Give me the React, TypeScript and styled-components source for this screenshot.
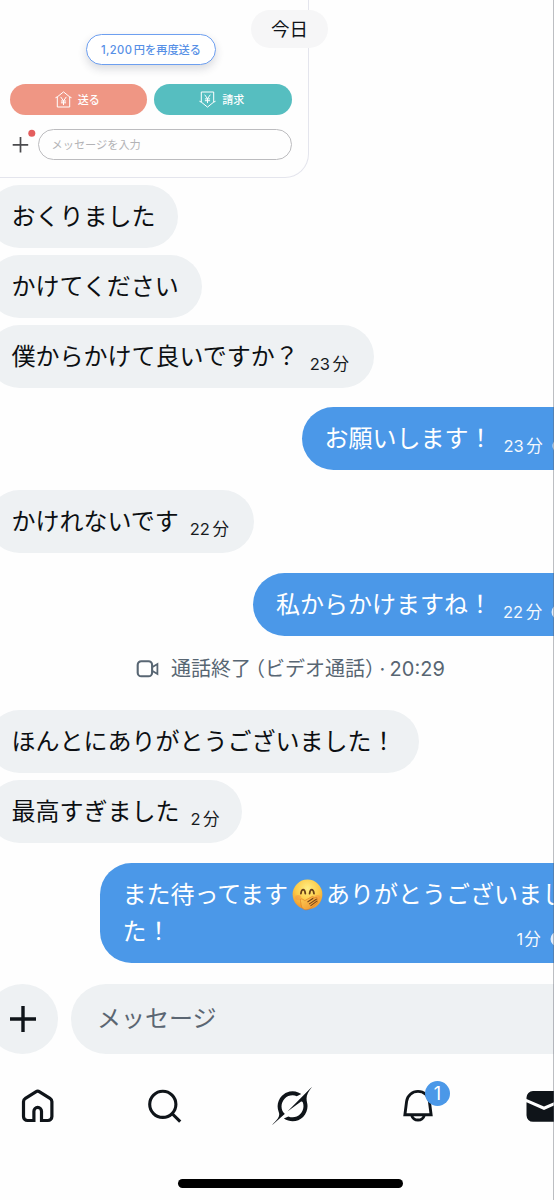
import React from 'react';
import styled, { createGlobalStyle, css } from 'styled-components';

const GlobalStyle = createGlobalStyle`
  * { box-sizing: border-box; }
  body { margin: 0; background: #fefefe; }
  svg { display: block; flex: none; }
`;

const Screen = styled.main`
  position: relative;
  width: 554px;
  height: 1200px;
  overflow: hidden;
  display: flex;
  flex-direction: column;
  background: #fefefe;
  color: #0f1419;
  font-family: Inter, 'Noto Sans CJK JP', sans-serif;
`;

const EdgeLine = styled.div`
  position: absolute;
  top: 0;
  right: 0;
  width: 1px;
  height: 100%;
  background: rgba(90, 95, 105, 0.4);
`;

const DatePill = styled.div`
  position: absolute;
  left: 251px;
  top: 10px;
  width: 77px;
  height: 38px;
  border-radius: 19px;
  background: #f6f6f7;
  display: flex;
  align-items: center;
  justify-content: center;
  font-size: 18.5px;
  line-height: 38px;
`;

const Card = styled.section`
  flex: none;
  width: 332px;
  height: 178px;
  margin-left: -23.5px;
  padding: 34px 16px 0 32px;
  border: 1px solid #e4e5ed;
  border-top: 0;
  border-radius: 0 0 24px 24px;
  display: flex;
  flex-direction: column;
`;

const ResendButton = styled.button`
  width: 130px;
  height: 31px;
  flex: none;
  margin-left: 76.5px;
  padding: 0;
  border: 1px solid #6d9ff0;
  border-radius: 16px;
  background: #fff;
  box-shadow: 0 4px 8px rgba(30, 40, 60, 0.16);
  color: #5790e6;
  font: 500 11.2px/30px Inter, 'Noto Sans CJK JP', sans-serif;
  white-space: nowrap;
`;

const Digits = styled.span`
  letter-spacing: 0.4px;
  margin-right: 1.5px;
`;

const CardActions = styled.div`
  display: flex;
  gap: 7px;
  margin-top: 19px;
`;

const ActionButton = styled.button<{ $tone: string }>`
  width: 137.5px;
  height: 31px;
  padding: 0 2px 0 0;
  border: 0;
  border-radius: 16px;
  background: ${(p) => p.$tone};
  color: #fff;
  display: flex;
  align-items: center;
  justify-content: center;
  gap: 6px;
  font: 500 11px/31px 'Noto Sans CJK JP', sans-serif;
`;

const CardCompose = styled.div`
  display: flex;
  align-items: center;
  margin-top: 14px;
`;

const CardInput = styled.div`
  width: 255px;
  height: 31px;
  border: 1px solid #bcbcbf;
  border-radius: 16px;
  padding-left: 13px;
  color: #b3b3b6;
  font-size: 11.2px;
  line-height: 30px;
`;

const Feed = styled.section`
  flex: none;
  display: flex;
  flex-direction: column;
  width: 603px;
  margin: 6.5px 0 0 -12px;
`;

const bubbleTone = {
  received: css`
    align-self: flex-start;
    background: #eef1f3;
    color: #0c0f12;
  `,
  sent: css`
    align-self: flex-end;
    background: #4b98e8;
    color: #fff;
  `,
};

const Bubble = styled.div<{ $from: 'received' | 'sent'; $w: number; $gap: number; $tall?: boolean }>`
  position: relative;
  width: ${(p) => p.$w}px;
  height: ${(p) => (p.$tall ? 100.5 : 63)}px;
  margin-top: ${(p) => p.$gap}px;
  padding: ${(p) => (p.$tall ? '12.5px' : '0')} 23px 0 ${(p) => (p.$from === 'sent' ? 23 : 23.5)}px;
  border-radius: 31.5px;
  display: flex;
  align-items: flex-start;
  font-size: 24px;
  line-height: ${(p) => (p.$tall ? 36.5 : 60)}px;
  white-space: nowrap;
  ${(p) => bubbleTone[p.$from]}
`;

const Words = styled.span`
  font-family: 'Noto Sans CJK JP', sans-serif;
`;

const Stamp = styled.span`
  display: flex;
  align-items: center;
  margin-left: 11px;
  padding-top: 9px;
  font-size: 16.5px;
  opacity: 0.95;
`;

const CornerStamp = styled(Stamp)`
  position: absolute;
  left: 417px;
  bottom: 8px;
  margin: 0;
  padding: 0;
  line-height: 32px;
`;

const Count = styled.span<{ $tight?: boolean }>`
  margin-right: ${(p) => (p.$tight ? 1 : 2.5)}px;
`;

const Unit = styled.span`
  margin-right: 9px;
`;

const InlineEmoji = styled.span`
  display: inline-block;
  width: 38px;
  height: 30px;
  padding: 0 3.5px;
  vertical-align: middle;
  margin-top: -6px;
`;

const CallNote = styled.div`
  height: 74px;
  flex: none;
  display: flex;
  align-items: center;
  padding: 0 0 9px 148px;
  color: #586673;
  font-size: 20px;
  line-height: 30px;
  white-space: nowrap;
`;

const CallText = styled.span`
  margin-left: 12px;
  word-spacing: -1.2px;
`;

const Paren = styled.span<{ $open?: boolean }>`
  font-family: 'Noto Sans CJK JP', sans-serif;
  font-feature-settings: 'halt';
  margin-left: ${(p) => (p.$open ? 4 : 0)}px;
`;

const Composer = styled.footer`
  flex: none;
  display: flex;
  gap: 13px;
  height: 70.5px;
  width: 620px;
  margin: 20.5px 0 0 -13px;
`;

const AddButton = styled.button`
  width: 71px;
  height: 70.5px;
  padding: 0;
  border: 0;
  border-radius: 50%;
  background: #eef1f3;
  display: flex;
  align-items: center;
  justify-content: center;
`;

const MessageField = styled.div`
  flex: 1;
  border-radius: 36px;
  background: #eef1f3;
  padding-left: 26px;
  color: #5b6672;
  font-size: 24px;
  line-height: 69px;
`;

const TabBar = styled.nav`
  flex: none;
  display: flex;
  justify-content: space-between;
  width: 549px;
  margin: 31px 0 0 17px;
`;

const Tab = styled.div`
  position: relative;
  width: 42px;
  height: 42px;
  display: flex;
  align-items: center;
  justify-content: center;
`;

const Badge = styled.span`
  position: absolute;
  left: 27.5px;
  top: -4.5px;
  width: 25.5px;
  height: 25.5px;
  border-radius: 50%;
  background: #4b98e8;
  color: #fff;
  font-size: 18px;
  line-height: 26px;
  text-align: center;
`;

const HomeIndicator = styled.div`
  flex: none;
  width: 224.5px;
  height: 8.5px;
  margin: 52px 0 0 178px;
  border-radius: 5px;
  background: #000;
`;

const YenIcon = ({ down }: { down?: boolean }) => (
  <svg width="17" height="17" viewBox="0 0 17 17" fill="none" stroke="#fff" strokeWidth="1" strokeLinejoin="round" strokeLinecap="round">
    <path d={down ? 'M2.3 11V1h12.4v10M.8 10.4l1.5.7 6.2 5 6.200-5 1.500-.7' : 'M2.300 6v10h12.400V6M.800 6.600l1.500-.7 6.200-5 6.200 5 1.500.7'} />
    <path d={down ? 'M5.900 4 8.500 7.700 11.100 4M8.500 7.700v4M6.300 7.900h4.400M6.300 9.700h4.400' : 'M5.900 6.200 8.500 9.900l2.600-3.700M8.500 9.900v3.800M6.300 10h4.400M6.300 11.800h4.400'} />
  </svg>
);

const CardPlus = () => (
  <svg width="28" height="31" viewBox="0 0 28 31">
    <path d="M2.700 15.800H18.200M10.500 8V23.500" stroke="#4b4b4e" strokeWidth="1.700" />
    <circle cx="21.800" cy="4.300" r="3.500" fill="#e35d5d" />
  </svg>
);

const SentCheck = () => (
  <svg width="16" height="16" viewBox="0 0 16 16">
    <circle cx="8" cy="8" r="7.5" fill="#e8f1fb" />
    <path d="M4.5 8.2 7 10.7l4.700-5" fill="none" stroke="#4b98e8" strokeWidth="1.6" />
  </svg>
);

const GiggleFace = () => (
  <svg width="31" height="32" viewBox="0 0 30 31">
    <defs>
      <radialGradient id="face" cx=".5" cy=".3" r=".72">
        <stop offset="0" stopColor="#ffef86" />
        <stop offset=".55" stopColor="#fdcb48" />
        <stop offset="1" stopColor="#ed9128" />
      </radialGradient>
      <linearGradient id="hand" x1="0" y1="0" x2="1" y2="1">
        <stop offset="0" stopColor="#ffce55" />
        <stop offset="1" stopColor="#ec902d" />
      </linearGradient>
    </defs>
    <circle cx="15" cy="15" r="14.4" fill="url(#face)" />
    <path d="M8.600 14.200q.5-3.800 2.200-3.800t2.100 3.800M17 14.200q.5-3.800 2.100-3.800t2.200 3.800" fill="none" stroke="#674019" strokeWidth="1.7" strokeLinecap="round" />
    <ellipse cx="6" cy="18" rx="3" ry="2.5" fill="#f58b45" opacity=".45" />
    <ellipse cx="24.5" cy="18" rx="3" ry="2.5" fill="#f58b45" opacity=".45" />
    <path d="M8.200 21.500c-.7-1.800.6-3 2.200-1.800l2 1.200 6.800-3.800c1.500-.8 2.500.5 1.300 1.500l2.800-.8c1.400-.2 1.700 1.200.6 1.800 1.200 0 1.600 1.200.5 1.800.8.4.8 1.300-.1 1.800l-4.800 4c-2.400 2.700-7.500 3.900-9.500.9-1.500-2-1.100-4.500-1.800-6.600Z" fill="url(#hand)" stroke="#d97923" strokeWidth=".6" />
    <path d="m15 22.300 5.500-3.700M16.500 24.300l7.400-4.900M17.900 26.100l6.500-4.900" stroke="#754219" strokeWidth="1" fill="none" />
  </svg>
);

const VideoIcon = () => (
  <svg width="23" height="18" viewBox="0 0 23 18" fill="none" stroke="#586673" strokeWidth="2.1">
    <rect x="1.7" y="1.300" width="14.400" height="15" rx="3.600" />
    <path d="M16.500 7 21.400 4v10L16.500 11" strokeWidth="1.800" />
  </svg>
);

const HomeIcon = () => (
  <svg width="42" height="42" viewBox="0 0 42 42" fill="none" stroke="#0f1419">
    <path d="M16.900 35.5H10.500a4 4 0 0 1-4-4V16.600a4 4 0 0 1 1.900-3.300L18.800 6.800a3.600 3.600 0 0 1 3.800 0L33 13.300a4 4 0 0 1 1.900 3.300v14.900a4 4 0 0 1-4 4H24.500V26.200a3.800 3.800 0 0 0-7.600 0Z" strokeWidth="3.200" />
  </svg>
);

const SearchIcon = () => (
  <svg width="42" height="42" viewBox="0 0 42 42" fill="none" stroke="#0f1419" strokeWidth="3.1">
    <circle cx="18.800" cy="19.300" r="13.100" />
    <path d="m28 28.500 8.200 8.200" />
  </svg>
);

const GrokIcon = () => (
  <svg width="40" height="40" viewBox="0 0 24 24" fill="#0f1419">
    <path d="M9.27 15.29l7.978-5.897c.391-.29.95-.177 1.137.272.98 2.369.542 5.215-1.41 7.169-1.951 1.954-4.667 2.382-7.149 1.406l-2.711 1.257c3.889 2.661 8.611 2.003 11.562-.953 2.341-2.344 3.066-5.539 2.388-8.42l.006.007c-.983-4.232.242-5.924 2.75-9.383.06-.082.12-.164.179-.248l-3.301 3.305v-.01L9.267 15.292M7.623 16.723c-2.792-2.67-2.31-6.801.071-9.184 1.761-1.763 4.647-2.483 7.166-1.425l2.705-1.25a7.808 7.808 0 00-1.829-1A8.975 8.975 0 005.984 5.83c-2.533 2.536-3.33 6.436-1.962 9.764 1.022 2.487-.653 4.246-2.34 6.022-.599.63-1.199 1.259-1.682 1.925l7.62-6.815" />
  </svg>
);

const BellIcon = () => (
  <svg width="42" height="42" viewBox="0 0 42 42" fill="none" stroke="#0f1419" strokeWidth="2.900">
    <path d="M7.900 29.700 9.600 16.400a11.500 11.500 0 0 1 22.800 0l1.700 13.300Z" />
    <path d="M14.800 30.500a6.300 5.500 0 0 0 12.400 0" />
  </svg>
);

const MailIcon = () => (
  <svg width="42" height="42" viewBox="0 0 42 42" fill="#0f1419">
    <path d="M2.500 12.500A6.500 6.500 0 0 1 9 6H31a6.500 6.500 0 0 1 6.500 6.500v1.500L20 21.500 2.500 14Z" />
    <path d="M2.500 17.300 20 25l17.500-7.700V30.300a6.500 6.500 0 0 1-6.500 6.500H9A6.500 6.500 0 0 1 2.500 30.300Z" />
  </svg>
);

interface Message {
  from: 'received' | 'sent';
  text: string;
  width: number;
  gap: number;
  minutes?: number;
}

const beforeCall: Message[] = [
  { from: 'received', text: 'おくりました', width: 190, gap: 0 },
  { from: 'received', text: 'かけてください', width: 214, gap: 7 },
  { from: 'received', text: '僕からかけて良いですか？', width: 386, gap: 7, minutes: 23 },
  { from: 'sent', text: 'お願いします！', width: 289.5, gap: 19.7, minutes: 23 },
  { from: 'received', text: 'かけれないです', width: 265.5, gap: 20, minutes: 22 },
  { from: 'sent', text: '私からかけますね！', width: 338, gap: 20, minutes: 22 },
];

const afterCall: Message[] = [
  { from: 'received', text: 'ほんとにありがとうございました！', width: 430.5, gap: 0 },
  { from: 'received', text: '最高すぎました', width: 254, gap: 7, minutes: 2 },
];

const MessageBubble = ({ m }: { m: Message }) => (
  <Bubble $from={m.from} $w={m.width} $gap={m.gap}>
    <Words>{m.text}</Words>
    {m.minutes && (
      <Stamp>
        <Count>{m.minutes}</Count>
        <Unit>分</Unit>
        {m.from === 'sent' && <SentCheck />}
      </Stamp>
    )}
  </Bubble>
);

export default function App() {
  return (
    <>
      <GlobalStyle />
      <Screen>
        <Card>
          <ResendButton>
            <Digits>1,200</Digits>円を再度送る
          </ResendButton>
          <CardActions>
            <ActionButton $tone="#ef9684"><YenIcon />送る</ActionButton>
            <ActionButton $tone="#56bec0"><YenIcon down />請求</ActionButton>
          </CardActions>
          <CardCompose>
            <CardPlus />
            <CardInput>メッセージを入力</CardInput>
          </CardCompose>
        </Card>

        <Feed>
          {beforeCall.map((m) => <MessageBubble key={m.text} m={m} />)}
          <CallNote>
            <VideoIcon />
            <CallText>
              通話終了<Paren $open>（</Paren>ビデオ通話<Paren>）</Paren> · 20:29
            </CallText>
          </CallNote>
          {afterCall.map((m) => <MessageBubble key={m.text} m={m} />)}
          <Bubble $from="sent" $w={491.5} $gap={19.5} $tall>
            <Words>
              また待ってます<InlineEmoji><GiggleFace /></InlineEmoji>ありがとうございまし<br />た！
            </Words>
            <CornerStamp>
              <Count $tight>1</Count>
              <Unit>分</Unit>
              <SentCheck />
            </CornerStamp>
          </Bubble>
        </Feed>

        <Composer>
          <AddButton>
            <svg width="28" height="28" viewBox="0 0 28 28" stroke="#0f1419" strokeWidth="3.4">
              <path d="M1 14h26M14 1v26" />
            </svg>
          </AddButton>
          <MessageField>メッセージ</MessageField>
        </Composer>

        <TabBar>
          <Tab><HomeIcon /></Tab>
          <Tab><SearchIcon /></Tab>
          <Tab><GrokIcon /></Tab>
          <Tab><BellIcon /><Badge>1</Badge></Tab>
          <Tab><MailIcon /></Tab>
        </TabBar>
        <HomeIndicator />

        <DatePill>今日</DatePill>
        <EdgeLine />
      </Screen>
    </>
  );
}
